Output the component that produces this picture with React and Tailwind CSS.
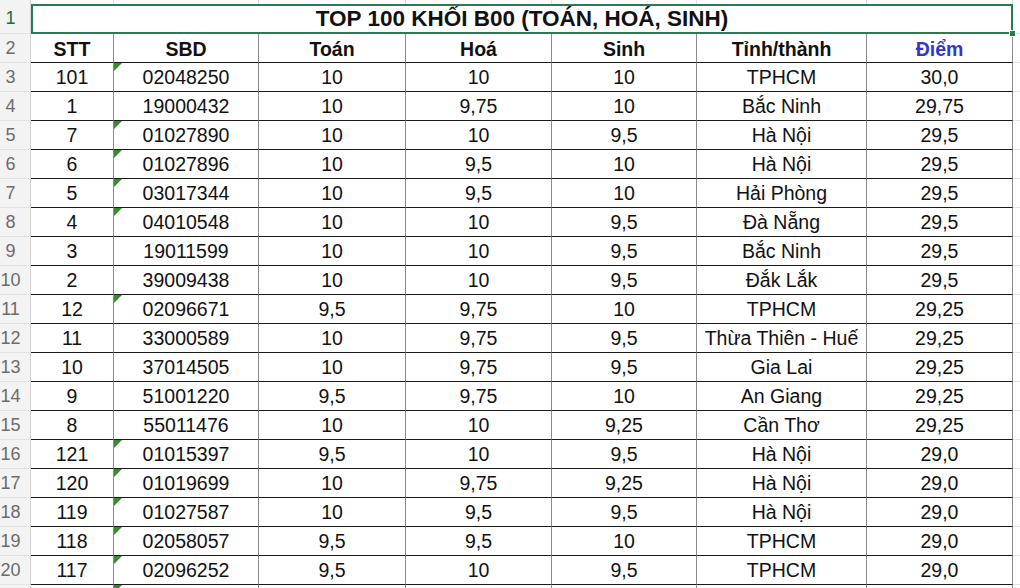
import React from "react";

// Spreadsheet view: top 100 khối B00
const COLS = [
  { key: "stt", w: "w-[83px]" },
  { key: "sbd", w: "w-[145px]" },
  { key: "toan", w: "w-[147px]" },
  { key: "hoa", w: "w-[146px]" },
  { key: "sinh", w: "w-[145px]" },
  { key: "tinh", w: "w-[170px]" },
  { key: "diem", w: "w-[146px]" },
];

const ROWS = [
  ["101", "02048250", "10", "10", "10", "TPHCM", "30,0"],
  ["1", "19000432", "10", "9,75", "10", "Bắc Ninh", "29,75"],
  ["7", "01027890", "10", "10", "9,5", "Hà Nội", "29,5"],
  ["6", "01027896", "10", "9,5", "10", "Hà Nội", "29,5"],
  ["5", "03017344", "10", "9,5", "10", "Hải Phòng", "29,5"],
  ["4", "04010548", "10", "10", "9,5", "Đà Nẵng", "29,5"],
  ["3", "19011599", "10", "10", "9,5", "Bắc Ninh", "29,5"],
  ["2", "39009438", "10", "10", "9,5", "Đắk Lắk", "29,5"],
  ["12", "02096671", "9,5", "9,75", "10", "TPHCM", "29,25"],
  ["11", "33000589", "10", "9,75", "9,5", "Thừa Thiên - Huế", "29,25"],
  ["10", "37014505", "10", "9,75", "9,5", "Gia Lai", "29,25"],
  ["9", "51001220", "9,5", "9,75", "10", "An Giang", "29,25"],
  ["8", "55011476", "10", "10", "9,25", "Cần Thơ", "29,25"],
  ["121", "01015397", "9,5", "10", "9,5", "Hà Nội", "29,0"],
  ["120", "01019699", "10", "9,75", "9,25", "Hà Nội", "29,0"],
  ["119", "01027587", "10", "9,5", "9,5", "Hà Nội", "29,0"],
  ["118", "02058057", "9,5", "9,5", "10", "TPHCM", "29,0"],
  ["117", "02096252", "9,5", "10", "9,5", "TPHCM", "29,0"],
];

const HEADERS = ["STT", "SBD", "Toán", "Hoá", "Sinh", "Tỉnh/thành", "Điểm"];

const RowHead = ({ n, active = false, h = "h-[29px]" }) => (
  <div
    className={`w-[31px] ${h} shrink-0 flex items-center justify-center pr-[9px] bg-[#f3f3f3] border-r border-[#d4d4d4] border-b border-b-[#e2e2e2] text-[18px] ${
      active ? "text-[#1e6b45]" : "text-[#6b6b6b]"
    }`}>
    {n}
  </div>
);

const TextFlag = () => (
  <span className="absolute left-0 top-0 w-0 h-0 border-t-[8px] border-t-[#3a8a2e] border-r-[8px] border-r-transparent" />
);

const App = () => {
  return (
    <div
      className="w-[1020px] h-[588px] overflow-hidden bg-white text-[#111]"
      style={{ fontFamily: '"Liberation Sans", Arial, sans-serif' }}>
      {/* sliver of the row above */}
      <div className="flex h-[4px]">
        <div className="w-[31px] shrink-0 bg-[#f3f3f3] border-r border-[#d4d4d4]" />
        {COLS.map((c) => (
          <div key={c.key} className={`${c.w} shrink-0 border-r border-[#dedede]`} />
        ))}
        <div className="flex-1" />
      </div>

      {/* title row */}
      <div className="flex h-[30px]">
        <RowHead n="1" active h="h-[30px]" />
        <div className="relative w-[982px] shrink-0 flex items-center justify-center border-2 border-[#2c7a52] font-bold text-[22.5px]">
          TOP 100 KHỐI B00 (TOÁN, HOÁ, SINH)
          <span className="absolute right-[-5px] bottom-[-5px] w-[7px] h-[7px] bg-[#2c7a52] border border-white" />
        </div>
        <div className="flex-1 border-b border-[#e2e2e2]" />
      </div>

      {/* header row */}
      <div className="flex h-[29px]">
        <RowHead n="2" />
        {HEADERS.map((t, i) => (
          <div
            key={t}
            className={`${COLS[i].w} shrink-0 flex items-center justify-center pt-[4px] border-r border-r-[#8c8c8c] border-b border-b-[#1a1a1a] font-bold text-[19.5px] ${
              t === "Điểm" ? "text-[#3535d0]" : ""
            }`}>
            {t}
          </div>
        ))}
        <div className="flex-1 border-b border-[#e2e2e2]" />
      </div>

      {/* data rows */}
      {ROWS.map((r, ri) => (
        <div key={ri} className="flex h-[29px]">
          <RowHead n={ri + 3} />
          {r.map((v, ci) => (
            <div
              key={ci}
              className={`relative ${COLS[ci].w} shrink-0 flex items-center justify-center pt-[1px] border-r border-r-[#8c8c8c] border-b border-b-[#1a1a1a] text-[19.5px]`}>
              {ci === 1 && v.startsWith("0") && <TextFlag />}
              {v}
            </div>
          ))}
          <div className="flex-1 border-b border-[#e2e2e2]" />
        </div>
      ))}

      {/* next row, only its top edge shows */}
      <div className="flex h-[29px]">
        <div className="w-[31px] h-[29px] shrink-0 bg-[#f3f3f3] border-r border-[#d4d4d4]" />
        {COLS.map((c, ci) => (
          <div key={c.key} className={`relative ${c.w} shrink-0 border-r border-r-[#8c8c8c]`}>
            {ci === 1 && <TextFlag />}
          </div>
        ))}
        <div className="flex-1" />
      </div>
    </div>
  );
};

export default App;
